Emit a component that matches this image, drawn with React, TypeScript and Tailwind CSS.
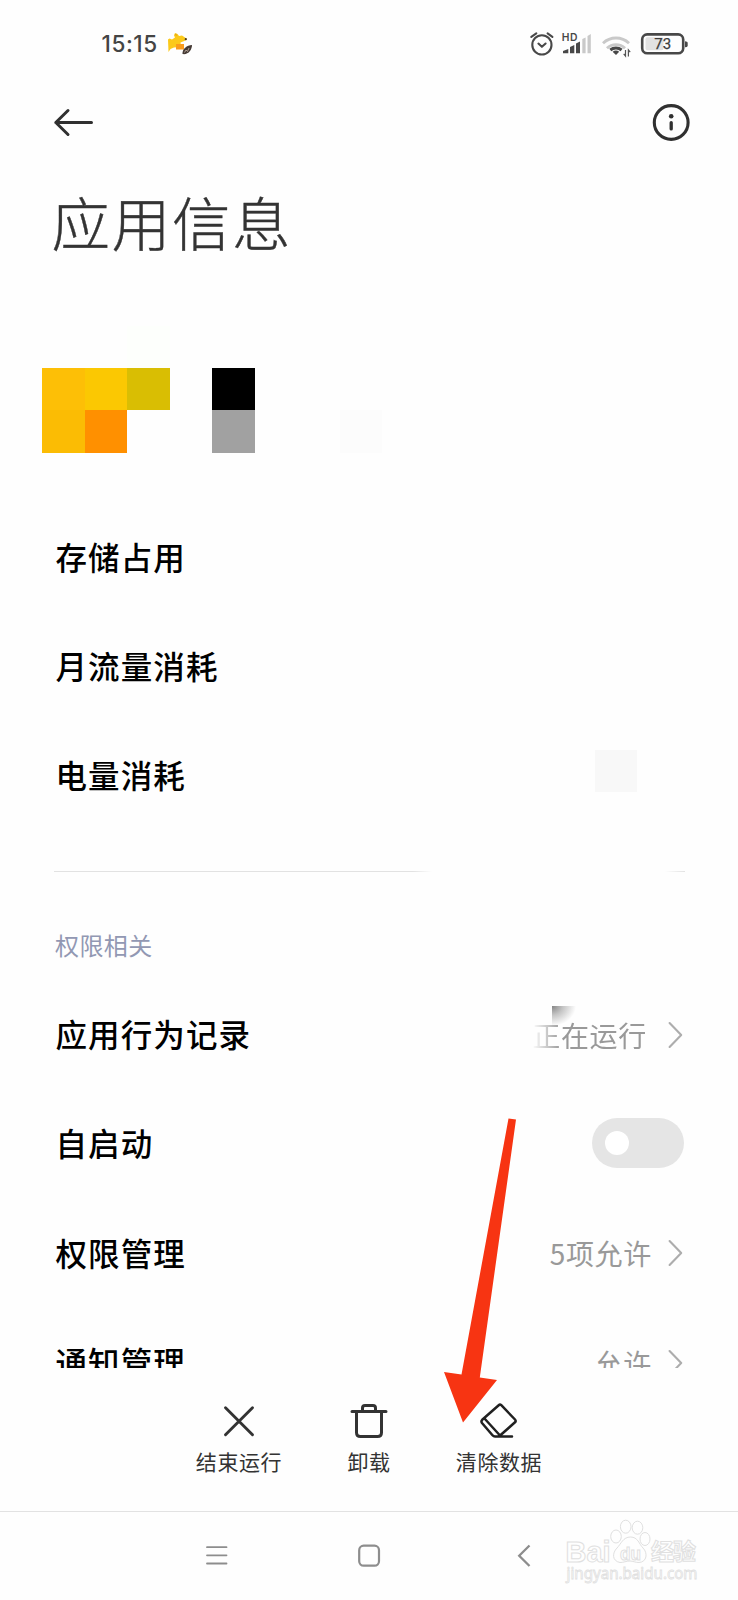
import type { ReactNode } from 'react';

function DogIcon() {
  return (
    <svg width="26" height="24" viewBox="0 0 26 24" className="ml-[9px] block">
      <path d="M1 7.5 2.5 6.5 5 7.5 8 5.5 7 3.5 8 1 10.5 2 12 4 15 3.5 19.5 6.5 19.5 8 16 9.5 13.5 10.5 14 15 7 15.5 3.5 17 1.5 20Z" fill="#fbc91a" />
      <path d="M9 12H17V17.5H9Z" fill="#fa9c1b" />
      <path d="M7.5 3 9 1.5 10.5 4Z" fill="#e8a813" />
      <circle cx="18.8" cy="7.2" r="1.1" fill="#4a3a20" />
      <path d="M15.5 22C15 17 20 13 25 13 25 18 21 23 15.5 22Z" fill="#453a35" />
      <path d="M17.5 20.5 19 18 20.5 19.5 22 16" stroke="#b8a79a" strokeWidth=".9" fill="none" />
    </svg>
  );
}

function StatusIcons() {
  return (
    <svg width="160" height="30" viewBox="530 29 160 30" className="block overflow-visible" fill="none">
      <g stroke="#484848" strokeWidth="2.1" strokeLinecap="round">
        <circle cx="541.9" cy="44.9" r="9.6" />
        <path d="M531.3 36.8 536.3 33.4M552.4 36.8 547.6 33.4" />
        <path d="M538.4 43.6 541.9 46.8 545.6 43.5" strokeLinejoin="round" />
      </g>
      <text x="561.8" y="41" fontSize="10.3" fontWeight="600" letterSpacing="0.5" fill="#484848" fontFamily="Inter, sans-serif">HD</text>
      <path d="M563 53.3V51L568.3 49V53.3ZM570 53.3V47L574.3 45V53.3ZM576 53.3V43.5L580 41.5V53.3Z" fill="#484848" />
      <path d="M582.3 53.3V39L585.6 37.5V53.3ZM587.5 53.3V36L590.8 34V53.3Z" fill="#c9c9c9" />
      <path d="M603 43.2A19 19 0 0 1 629 43.2M607 48.2A13 13 0 0 1 625 48.2" stroke="#c9c9c9" strokeWidth="2.9" />
      <path d="M610.3 50A8.8 8.8 0 0 1 621.6 50" stroke="#484848" strokeWidth="3" />
      <path d="M612.6 51.8Q616 49.2 619.2 51.8L616 55Z" fill="#484848" />
      <path d="M625.5 50V56L623.7 53.8M628.4 56.5V50L630.2 52.2" stroke="#555" strokeWidth="1.2" />
      <rect x="642.2" y="34.4" width="41" height="18.8" rx="5" stroke="#484848" strokeWidth="2.6" />
      <rect x="645.5" y="37.3" width="18" height="13" rx="2" fill="#e2e2e2" />
      <path d="M685 41.3Q687.7 41.3 687.7 42.8V45.8Q687.7 47.3 685 47.3Z" fill="#484848" />
      <text x="662.8" y="49.3" fontSize="15" textAnchor="middle" fill="#3c3c3c" stroke="#3c3c3c" strokeWidth=".25" fontFamily="Roboto, sans-serif">73</text>
    </svg>
  );
}

function Chevron() {
  return (
    <svg width="16" height="28" viewBox="0 0 16 28" fill="none" className="ml-[17px] block shrink-0">
      <path d="M1.6 2 13.2 14 1.6 26" stroke="#adadad" strokeWidth="2.1" strokeLinecap="round" strokeLinejoin="round" />
    </svg>
  );
}

function Row({ label, children }: { label: string; children?: ReactNode }) {
  return (
    <div className="flex h-[109.33px] shrink-0 items-center justify-between pl-[55.5px] pr-[54px]">
      <span className="mb-[3px] text-[31.5px] font-medium leading-[36px] tracking-[1.1px] text-black">{label}</span>
      <div className="flex items-center text-[28px] leading-[32px] tracking-[0.7px] text-[#999]">{children}</div>
    </div>
  );
}

const mosaic: { place: string; color: string }[] = [
  { place: 'col-start-3 row-start-1', color: 'bg-[#fdfffc]' },
  { place: 'col-start-1 row-start-2', color: 'bg-[#fdbf06]' },
  { place: 'col-start-2 row-start-2', color: 'bg-[#fbc802]' },
  { place: 'col-start-3 row-start-2', color: 'bg-[#d9be03]' },
  { place: 'col-start-5 row-start-2', color: 'bg-black' },
  { place: 'col-start-1 row-start-3', color: 'bg-[#fbbc04]' },
  { place: 'col-start-2 row-start-3', color: 'bg-[#ff9000]' },
  { place: 'col-start-5 row-start-3', color: 'bg-[#a1a1a1]' },
  { place: 'col-start-8 row-start-3', color: 'bg-[#fcfcfc]' },
];

function Action({ label, children }: { label: string; children: ReactNode }) {
  return (
    <div className="flex w-[130px] flex-col items-center">
      <svg width="42" height="42" viewBox="0 0 42 42" fill="none" strokeLinecap="round" strokeLinejoin="round" className="block">
        {children}
      </svg>
      <span className="mt-[8px] whitespace-nowrap text-[21px] leading-[22px] tracking-[0.6px] text-[#333]">{label}</span>
    </div>
  );
}

function Watermark() {
  return (
    <svg width="140" height="74" viewBox="562 1516 140 74" className="absolute right-[36px] top-[4px]" fill="#fefefe" stroke="#e0e0e0" strokeWidth="1">
      <text x="565.5" y="1561.5" fontSize="29" fontWeight="700" fontFamily="Liberation Sans, sans-serif" textLength="45" lengthAdjust="spacingAndGlyphs">Bai</text>
      <ellipse cx="616" cy="1536.5" rx="5.3" ry="6.5" />
      <ellipse cx="625.7" cy="1526.7" rx="5.3" ry="6.5" />
      <ellipse cx="637.5" cy="1527.7" rx="5.3" ry="6.5" />
      <ellipse cx="645" cy="1539" rx="5" ry="6.5" />
      <path d="M630.5 1537C638 1537 639 1544 643 1548 648 1553 647 1562 639 1562.5 635 1562.5 633 1561 630 1561 626 1561 624 1562.5 620 1562.5 612 1561 612 1553 617 1548 621 1544 623 1537 630.5 1537Z" />
      <text x="620" y="1559.5" fontSize="19" fontWeight="700" fontFamily="Liberation Sans, sans-serif" textLength="21" lengthAdjust="spacingAndGlyphs">du</text>
      <text x="651" y="1559.8" fontSize="23" fontWeight="700" fontFamily="Noto Sans CJK SC, sans-serif" textLength="45">经验</text>
      <text x="566.5" y="1578.8" fontSize="15.5" fontFamily="Noto Sans, sans-serif" textLength="131" lengthAdjust="spacingAndGlyphs" strokeWidth=".8">jingyan.baidu.com</text>
    </svg>
  );
}

export default function App() {
  return (
    <div className="relative flex h-[1600px] w-[738px] flex-col overflow-hidden bg-[#fefefe] font-['Noto_Sans_CJK_SC',sans-serif]">
      <header className="flex h-[88px] shrink-0 items-center justify-between pl-[101.5px] pr-[48px]">
        <div className="flex items-center">
          <span className="pt-[1px] font-['Inter',sans-serif] text-[22.5px] font-medium leading-none tracking-[0.6px] text-[#444]">15:15</span>
          <DogIcon />
        </div>
        <StatusIcons />
      </header>

      <nav className="flex h-[68px] shrink-0 items-center justify-between pl-[52px] pr-[46px]">
        <svg width="44" height="32" viewBox="0 0 44 32" fill="none" stroke="#303030" strokeWidth="3" strokeLinecap="round" strokeLinejoin="round">
          <path d="M39.5 16.5H3.8M16 4.5 3.8 16.5 16 28.5" />
        </svg>
        <svg width="42" height="42" viewBox="0 0 42 42" fill="none" stroke="#303030">
          <circle cx="21.2" cy="21.5" r="16.9" strokeWidth="3.1" />
          <circle cx="21.2" cy="15.2" r="2.3" fill="#303030" stroke="none" />
          <path d="M21.2 21.7V27.9" strokeWidth="3.3" strokeLinecap="round" />
        </svg>
      </nav>

      <main className="flex h-[1212px] shrink-0 flex-col overflow-hidden">
        <h1 className="h-[169.5px] shrink-0 pl-[51.5px] pt-[35px] text-[58.5px] font-light leading-[60px] tracking-[1.7px] text-[#333] [-webkit-text-stroke:0.4px_#333]">应用信息</h1>

        <div className="ml-[42px] grid shrink-0 grid-cols-[repeat(8,42.5px)] grid-rows-[repeat(3,42.4px)]">
          {mosaic.map((cell) => (
            <div key={cell.place} className={`${cell.place} ${cell.color}`} />
          ))}
        </div>

        <section className="mt-[50px] flex shrink-0 flex-col">
          <Row label="存储占用" />
          <Row label="月流量消耗" />
          <Row label="电量消耗">
            <div className="mb-[10px] mr-[47px] h-[42px] w-[42px] bg-[#f8f8f8]" />
          </Row>
        </section>

        <div className="ml-[54px] mt-[40px] flex h-[1.5px] w-[631px] shrink-0 justify-between">
          <div className="w-[378px] bg-linear-to-r from-[#e2e2e2] from-95% to-[#fefefe]" />
          <div className="w-[20px] bg-linear-to-r from-[#fefefe] to-[#e2e2e2]" />
        </div>

        <h2 className="mt-[60px] h-[47.8px] shrink-0 pl-[55px] text-[24px] leading-[26px] tracking-[0.4px] text-[#9298b3]">权限相关</h2>

        <section className="flex shrink-0 flex-col">
          <Row label="应用行为记录">
            <div className="relative mr-[4px]">
              <div className="absolute left-[20px] top-[-13px] h-[20px] w-[24px] bg-[radial-gradient(ellipse_farthest-side_at_top_left,#858585_0%,#c4c4c4_45%,#fefefe_100%)]" />
              <span className="relative mask-l-from-75% mask-l-to-100%">正在运行</span>
            </div>
            <Chevron />
          </Row>
          <Row label="自启动">
            <div className="mb-[2px] flex h-[50px] w-[92px] items-center rounded-full bg-[#e5e5e5] pl-[13px]">
              <div className="h-[24px] w-[24px] rounded-full bg-white" />
            </div>
          </Row>
          <Row label="权限管理">
            <span className="-mr-[1px]">5项允许</span>
            <Chevron />
          </Row>
          <Row label="通知管理">
            <span className="-mr-[1px]">允许</span>
            <Chevron />
          </Row>
        </section>
      </main>

      <section className="flex h-[143px] shrink-0 justify-center pt-[32px]">
        <Action label="结束运行">
          <path d="M7.5 7.8 34.5 34.8M34.5 7.8 7.5 34.8" stroke="#333" strokeWidth="2.9" />
        </Action>
        <Action label="卸载">
          <path d="M4 11.5H38M14.5 11V8Q14.5 5.5 17 5.5H25Q27.5 5.5 27.5 8V11M8.5 12V32.5Q8.5 36.5 12.5 36.5H29.5Q33.5 36.5 33.5 32.5V12" stroke="#333" strokeWidth="3" />
        </Action>
        <Action label="清除数据">
          <path d="M34 36.5H17Q15.5 36.5 14.5 35.3L4 23Q2.8 21.3 4.2 19.8L20.7 5.2Q22 4 23.3 5.2L37 19.5Q38.3 21 37 22.3L21.5 36M6.5 18.5 22 35.5" stroke="#202020" strokeWidth="2.5" />
        </Action>
      </section>

      <footer className="relative h-[89px] shrink-0 border-t border-[#e2e2e2]">
        <svg width="738" height="88" viewBox="0 1512 738 88" fill="none" stroke="#8d8d8d" className="block">
          <path d="M207 1547.2H226.5M207 1555.3H226.5M207 1563.5H226.5" strokeWidth="1.8" strokeLinecap="round" />
          <rect x="359.2" y="1545.7" width="19.8" height="20" rx="4.5" strokeWidth="2.2" />
          <path d="M529.5 1545.5 519.2 1555.7 529.5 1566" strokeWidth="2.3" />
        </svg>
        <Watermark />
      </footer>

      <svg width="60" height="310" viewBox="440 1115 60 310" className="pointer-events-none absolute left-[440px] top-[1115px] overflow-visible">
        <path d="M508.5 1118.5 516 1119.5 479.8 1377.5 497 1380 463 1422.5 444 1372 461.5 1374.5Z" fill="#f73412" />
      </svg>
    </div>
  );
}
